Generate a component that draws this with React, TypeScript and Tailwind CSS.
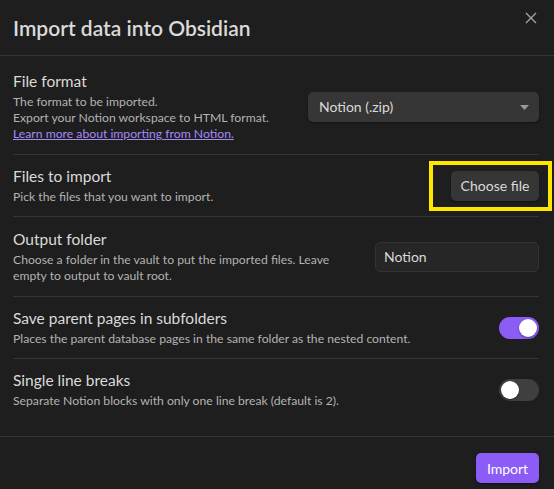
import React from "react";

const Toggle = ({ on }: { on: boolean }) => (
  <div
    className={
      "flex h-[22px] w-[40px] shrink-0 items-center rounded-full px-[2px] " +
      (on ? "justify-end bg-[#8b5cf6]" : "justify-start bg-[#3f3f3f]")
    }
  >
    <div className="h-[18px] w-[18px] rounded-full bg-white shadow-[0_1px_2px_rgba(0,0,0,0.4)]" />
  </div>
);

export default function App() {
  return (
    <div
      className="relative h-[489px] w-[554px] overflow-hidden bg-[#1e1e1e] text-[#dadada]"
      style={{ fontFamily: "'Segoe UI', Lato, 'Noto Sans', sans-serif" }}
    >
      {/* close */}
      <button className="absolute right-[17px] top-[12px] flex h-[12px] w-[12px] items-center justify-center text-[#a3a3a3]">
        <svg width="12" height="12" viewBox="0 0 12 12" fill="none" stroke="currentColor" strokeWidth="1.4">
          <path d="M1 1L11 11M11 1L1 11" />
        </svg>
      </button>

      {/* header */}
      <div className="flex h-[56px] items-center border-b border-[#363636] px-[13px]">
        <h1 className="text-[21px] font-semibold leading-[28px] text-[#dadada]">Import data into Obsidian</h1>
      </div>

      {/* content */}
      <div className="pl-[13px] pr-[15px] pb-[16px] border-b border-[#363636]">
        {/* File format */}
        <div className="flex items-center justify-between border-b border-[#363636] pt-[15px] pb-[12px]">
          <div>
            <div className="text-[15.5px] leading-[20px]">File format</div>
            <div className="mt-[3px] text-[12.2px] leading-[16px] text-[#b3b3b3]">
              <div>The format to be imported.</div>
              <div>Export your Notion workspace to HTML format.</div>
              <a className="text-[#a68af9] underline decoration-[#a68af9]" href="#">
                Learn more about importing from Notion.
              </a>
            </div>
          </div>
          <div className="relative flex h-[30px] w-[231px] items-center rounded-[5px] bg-[#363636] pl-[11px] text-[14px] text-[#dadada] shadow-[0_1px_2px_rgba(0,0,0,0.45)]">
            Notion (.zip)
            <svg className="absolute right-[10px] top-[13px]" width="9" height="5" viewBox="0 0 9 5">
              <path d="M0 0H9L4.5 5Z" fill="#9a9a9a" />
            </svg>
          </div>
        </div>

        {/* Files to import */}
        <div className="flex items-center justify-between border-b border-[#363636] py-[11px]">
          <div>
            <div className="text-[15.5px] leading-[20px]">Files to import</div>
            <div className="mt-[3px] text-[12.2px] leading-[16px] text-[#b3b3b3]">Pick the files that you want to import.</div>
          </div>
          <div className="relative">
            <div className="absolute -left-[22px] -right-[13px] -top-[10px] -bottom-[10px] border-[4px] border-[#ffe600]" />
            <button className="flex h-[30px] w-[88px] items-center justify-center rounded-[5px] bg-[#363636] text-[14px] text-[#dadada] shadow-[0_1px_2px_rgba(0,0,0,0.45)]">
              Choose file
            </button>
          </div>
        </div>

        {/* Output folder */}
        <div className="flex items-center justify-between border-b border-[#363636] py-[12px]">
          <div>
            <div className="text-[15.5px] leading-[20px]">Output folder</div>
            <div className="mt-[3px] text-[12.2px] leading-[16px] text-[#b3b3b3]">
              Choose a folder in the vault to put the imported files. Leave
              <br />
              empty to output to vault root.
            </div>
          </div>
          <div className="flex h-[30px] w-[164px] items-center rounded-[5px] border border-[#333] bg-[#262626] pl-[8px] text-[14px] text-[#dadada]">
            Notion
          </div>
        </div>

        {/* Save parent pages */}
        <div className="flex items-center justify-between border-b border-[#363636] py-[11px]">
          <div>
            <div className="text-[15.5px] leading-[20px]">Save parent pages in subfolders</div>
            <div className="mt-[3px] text-[12.2px] leading-[16px] text-[#b3b3b3]">
              Places the parent database pages in the same folder as the nested content.
            </div>
          </div>
          <Toggle on />
        </div>

        {/* Single line breaks */}
        <div className="flex items-center justify-between py-[11px]">
          <div>
            <div className="text-[15.5px] leading-[20px]">Single line breaks</div>
            <div className="mt-[3px] text-[12.2px] leading-[16px] text-[#b3b3b3]">
              Separate Notion blocks with only one line break (default is 2).
            </div>
          </div>
          <Toggle on={false} />
        </div>
      </div>

      {/* footer */}
      <div className="flex justify-end pr-[15px] pt-[16px]">
        <button className="flex h-[30px] w-[63px] items-center justify-center rounded-[5px] bg-[#8b5cf6] text-[14px] text-white shadow-[0_1px_2px_rgba(0,0,0,0.45)]">
          Import
        </button>
      </div>
    </div>
  );
}
